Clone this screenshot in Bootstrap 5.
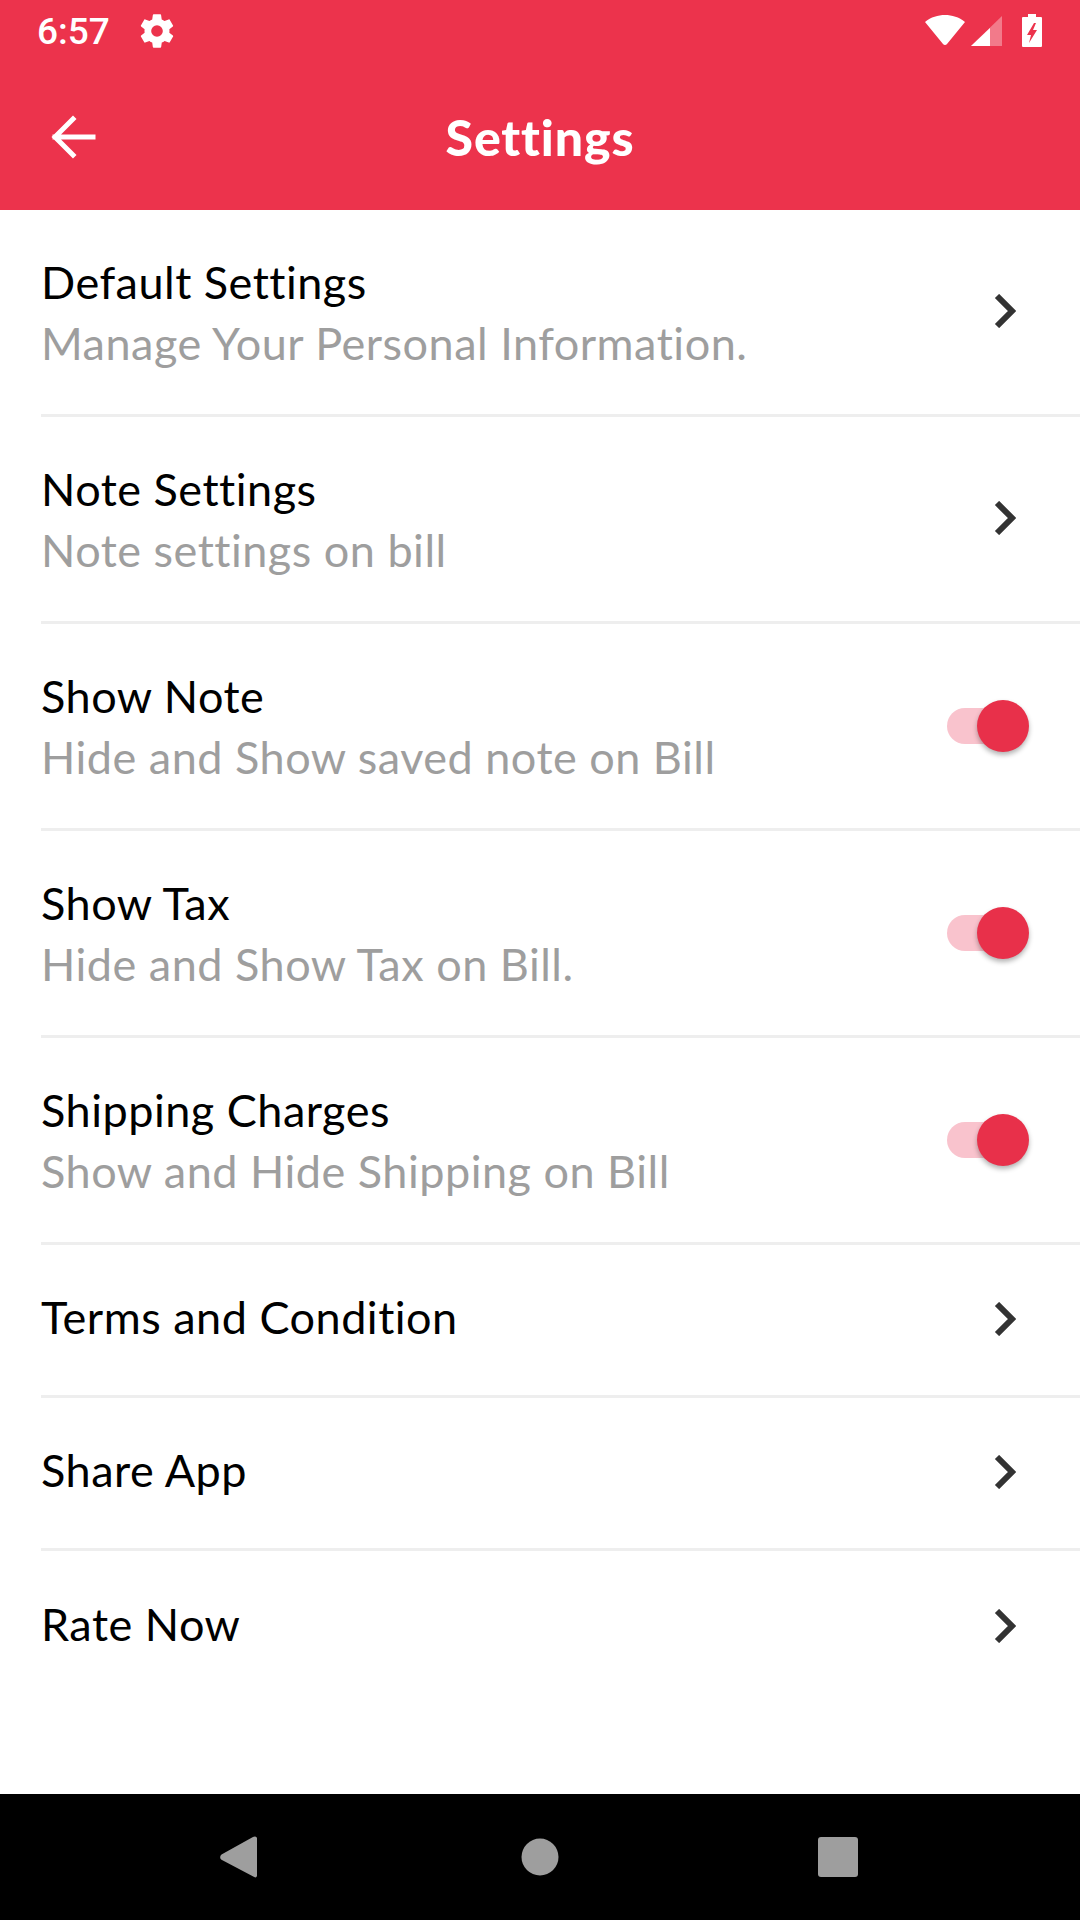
<!DOCTYPE html>
<html lang="en">
<head>
<meta charset="utf-8">
<title>Settings</title>
<link href="https://cdn.jsdelivr.net/npm/bootstrap@5.3.0/dist/css/bootstrap.min.css" rel="stylesheet">
<style>
html,body{margin:0;height:1920px;width:1080px;overflow:hidden;background:#fff}
body{font-family:"Lato","Noto Sans",sans-serif}
.screen{height:1920px}
.appbar{height:210px;background:#ec334c;color:#fff;position:relative}
.statusrow{height:56px;padding:10px 37px 0 37px}
.clock{font-size:37px;line-height:44px;width:100px;font-family:"Roboto",sans-serif;font-weight:500}
.gearicon{margin-top:1px}
.statusicons{margin-top:4px}
.titlerow{height:154px;position:relative}
.backicon{position:absolute;left:50px;top:58px}
.pagetitle{margin:0;font-size:50px;font-weight:900;line-height:60px;padding-top:51px;letter-spacing:.9px}
.setrow{border:0;border-radius:0;padding:0;background:#fff}
.rowinner{margin-left:41px;border-bottom:3px solid #eeeeee;padding-right:64px}
.rowtall{height:207px}
.rowshort{height:153px}
.rownoline{border-bottom:0}
.t1{font-size:45px;line-height:61px;color:#000;letter-spacing:.5px}
.t2{font-size:45px;line-height:61px;color:#9e9e9e;letter-spacing:.5px}
.rowtall .textstack{margin-top:2px}
.rowshort .t1{margin-top:-6px}
.chev{margin-top:-2px}
.rowshort .chev{margin-top:-3px}
.toggletrack{width:68px;height:36px;border-radius:18px;background:#f9c3cd;position:relative;margin-right:1px;margin-top:-1px}
.toggleknob{position:absolute;width:52px;height:52px;border-radius:50%;background:#e8304a;top:-8px;right:-14px;box-shadow:0 3px 5px rgba(0,0,0,.3)}
.navbottom{height:126px;background:#000;flex:none;position:relative}
.navglyph{position:absolute;left:0;top:0}
</style>
</head>
<body>
<div class="screen d-flex flex-column">
  <header class="appbar flex-shrink-0">
    <div class="statusrow d-flex align-items-start">
      <span class="clock">6:57</span>
      <svg class="gearicon" width="40" height="40" viewBox="0 0 24 24" fill="#fff" aria-hidden="true"><path fill-rule="evenodd" d="M19.4 13c.04-.32.07-.65.07-1s-.03-.68-.07-1l2.1-1.65c.19-.15.24-.42.12-.64l-2-3.46c-.12-.22-.39-.3-.61-.22l-2.49 1c-.52-.4-1.08-.73-1.69-.98l-.38-2.65A.49.49 0 0 0 14 2h-4c-.25 0-.46.18-.49.42l-.38 2.65c-.61.25-1.17.59-1.69.98l-2.49-1c-.23-.09-.49 0-.61.22l-2 3.46c-.13.22-.07.49.12.64L4.57 11c-.04.32-.07.66-.07 1s.03.68.07 1l-2.11 1.65c-.19.15-.24.42-.12.64l2 3.46c.12.22.39.3.61.22l2.49-1c.52.4 1.08.73 1.69.98l.38 2.65c.03.24.24.42.49.42h4c.25 0 .46-.18.49-.42l.38-2.65c.61-.25 1.17-.59 1.69-.98l2.49 1c.23.09.49 0 .61-.22l2-3.46c.12-.22.07-.49-.12-.64zM12 15.500a3.500 3.500 0 1 1 0-7 3.500 3.500 0 0 1 0 7z"/></svg>
      <div class="statusicons ms-auto">
        <svg class="d-block" width="118" height="34" viewBox="0 0 118 34" aria-hidden="true">
          <path fill="#fff" d="M0 8C6 3 13 1 20 1s14 2 20 7L22 30c-1 1.300-3 1.300-4 0z"/>
          <path fill="#fff" fill-opacity=".35" d="M46 32 77 2v30z"/>
          <path fill="#fff" d="M46 32 65 14v18z"/>
          <path fill="#fff" fill-rule="evenodd" d="M98 3h5V0h8v3h5a1 1 0 0 1 1 1v28a1 1 0 0 1-1 1H98a1 1 0 0 1-1-1V4a1 1 0 0 1 1-1zm11 6-7 12h4l-2 8 8-13h-4l3-7z"/>
        </svg>
      </div>
    </div>
    <div class="titlerow text-center">
      <svg class="backicon" width="46" height="46" viewBox="0 0 46 46" fill="none" stroke="#fff" stroke-width="5" stroke-linecap="square" aria-hidden="true"><path d="M5 23h38M23 5 5 23l18 18"/></svg>
      <h1 class="pagetitle">Settings</h1>
    </div>
  </header>

  <main class="list-group list-group-flush flex-grow-1">
    <div class="list-group-item setrow"><div class="rowinner rowtall d-flex align-items-center justify-content-between">
      <div class="textstack"><div class="t1">Default Settings</div><div class="t2">Manage Your Personal Information.</div></div>
      <svg class="chev" width="22" height="34" viewBox="0 0 22 34" fill="none" stroke="#333" stroke-width="6" aria-hidden="true"><path d="M3 2l15 15L3 32"/></svg>
    </div></div>
    <div class="list-group-item setrow"><div class="rowinner rowtall d-flex align-items-center justify-content-between">
      <div class="textstack"><div class="t1">Note Settings</div><div class="t2">Note settings on bill</div></div>
      <svg class="chev" width="22" height="34" viewBox="0 0 22 34" fill="none" stroke="#333" stroke-width="6" aria-hidden="true"><path d="M3 2l15 15L3 32"/></svg>
    </div></div>
    <div class="list-group-item setrow"><div class="rowinner rowtall d-flex align-items-center justify-content-between">
      <div class="textstack"><div class="t1">Show Note</div><div class="t2">Hide and Show saved note on Bill</div></div>
      <div class="toggletrack"><div class="toggleknob"></div></div>
    </div></div>
    <div class="list-group-item setrow"><div class="rowinner rowtall d-flex align-items-center justify-content-between">
      <div class="textstack"><div class="t1">Show Tax</div><div class="t2">Hide and Show Tax on Bill.</div></div>
      <div class="toggletrack"><div class="toggleknob"></div></div>
    </div></div>
    <div class="list-group-item setrow"><div class="rowinner rowtall d-flex align-items-center justify-content-between">
      <div class="textstack"><div class="t1">Shipping Charges</div><div class="t2">Show and Hide Shipping on Bill</div></div>
      <div class="toggletrack"><div class="toggleknob"></div></div>
    </div></div>
    <div class="list-group-item setrow"><div class="rowinner rowshort d-flex align-items-center justify-content-between">
      <div class="t1">Terms and Condition</div>
      <svg class="chev" width="22" height="34" viewBox="0 0 22 34" fill="none" stroke="#333" stroke-width="6" aria-hidden="true"><path d="M3 2l15 15L3 32"/></svg>
    </div></div>
    <div class="list-group-item setrow"><div class="rowinner rowshort d-flex align-items-center justify-content-between">
      <div class="t1">Share App</div>
      <svg class="chev" width="22" height="34" viewBox="0 0 22 34" fill="none" stroke="#333" stroke-width="6" aria-hidden="true"><path d="M3 2l15 15L3 32"/></svg>
    </div></div>
    <div class="list-group-item setrow"><div class="rowinner rowshort rownoline d-flex align-items-center justify-content-between">
      <div class="t1">Rate Now</div>
      <svg class="chev" width="22" height="34" viewBox="0 0 22 34" fill="none" stroke="#333" stroke-width="6" aria-hidden="true"><path d="M3 2l15 15L3 32"/></svg>
    </div></div>
  </main>

  <footer class="navbottom">
    <svg class="navglyph" width="1080" height="126" viewBox="0 0 1080 126" fill="#9e9e9e" aria-hidden="true">
      <path d="M255 42.500c1 0 2 .8 2 2v37c0 1.500-1.300 2.500-2.800 1.500L221.500 65.800c-1.800-1.500-1.800-3.800 0-5.300L252.500 43.200c.8-.5 1.500-.7 2.500-.7z"/>
      <circle cx="540" cy="63" r="18.500"/>
      <rect x="818" y="43" width="40" height="40" rx="3"/>
    </svg>
  </footer>
</div>
<script src="https://cdn.jsdelivr.net/npm/bootstrap@5.3.0/dist/js/bootstrap.bundle.min.js"></script>
</body>
</html>
